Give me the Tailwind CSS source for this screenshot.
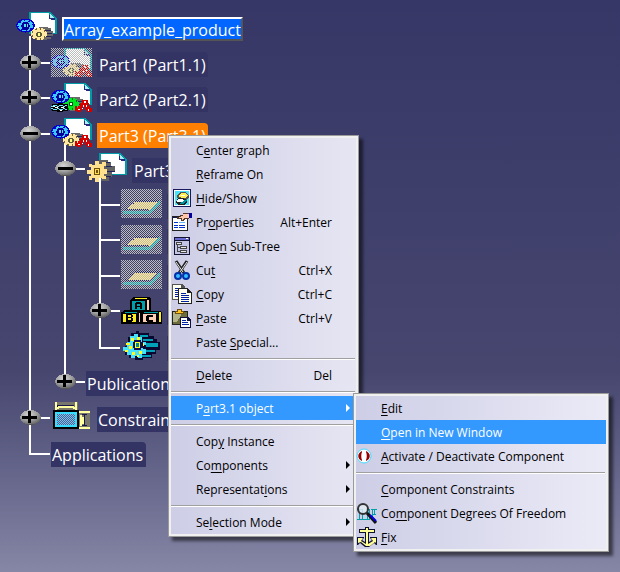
<!DOCTYPE html>
<html lang="en">
<head>
<meta charset="utf-8">
<meta name="viewport" content="width=device-width, initial-scale=1">
<title>Array_example_product</title>
<script src="https://cdn.jsdelivr.net/npm/@tailwindcss/browser@4"></script>
</head>
<body class="relative min-h-screen overflow-hidden bg-linear-to-b from-[#373767] via-[#46466f] via-65% to-[#8686a6] font-['Open_Sans','Noto_Sans',sans-serif] text-black">

<svg class="absolute size-0" aria-hidden="true">
  <defs>
    <!-- one-pixel checkerboards: dashed rows, the odd rows shifted by one -->
    <g id="checker" fill="none" stroke="#bdbdbd" stroke-dasharray="1 1">
      <path d="M0 .5h41m-41 2h41m-41 2h41m-41 2h41m-41 2h41m-41 2h41m-41 2h41m-41 2h41m-41 2h41m-41 2h41m-41 2h41m-41 2h41m-41 2h41m-41 2h41m-41 2h41"/>
      <path d="M1 -.5h40m-40 2h40m-40 2h40m-40 2h40m-40 2h40m-40 2h40m-40 2h40m-40 2h40m-40 2h40m-40 2h40m-40 2h40m-40 2h40m-40 2h40m-40 2h40m-40 2h40"/>
    </g>
    <g id="holes" fill="none" stroke="#8c4880" stroke-dasharray="1 1">
      <path d="M6 12.500h18m-18 2h18m-18 2h18m-18 2h18m-18 2h18m-18 2h18"/>
      <path d="M7 13.500h17m-17 2h17m-17 2h17m-17 2h17m-17 2h17"/>
    </g>
    <radialGradient id="metal" cx=".4" cy=".3" r=".7">
      <stop offset="0" stop-color="#d4d4d4"/><stop offset=".55" stop-color="#a2a2a2"/><stop offset="1" stop-color="#606060"/>
    </radialGradient>

    <!-- tree guides, 35px columns -->
    <symbol id="g-v" viewBox="0 0 35 36"><path fill="#fff" d="M14 0h2v36h-2z"/></symbol>
    <symbol id="g-l" viewBox="0 0 35 36"><path fill="#fff" d="M14 0h2v16h19v2H14z"/></symbol>
    <symbol id="g-t" viewBox="0 0 35 36"><path fill="#fff" d="M14 0h2v36h-2zM16 15h19v2H16z"/></symbol>
    <g id="knob"><ellipse cx="15.500" cy="15.500" rx="10.500" ry="7.500" fill="url(#metal)"/><path fill="#555" d="M11 22h9v1h-9z"/></g>
    <symbol id="g-plus" viewBox="0 0 35 36"><path fill="#fff" d="M14 0h2v36h-2zM16 15h19v2H16z"/><use href="#knob"/><path d="M7 14h15v3H7zM13 9h3v12h-3z"/></symbol>
    <symbol id="g-plus-end" viewBox="0 0 35 36"><path fill="#fff" d="M14 0h2v9h-2zM16 15h19v2H16z"/><use href="#knob"/><path d="M7 14h15v3H7zM13 9h3v12h-3z"/></symbol>
    <symbol id="g-minus" viewBox="0 0 35 36"><path fill="#fff" d="M14 0h2v36h-2zM16 15h19v2H16z"/><use href="#knob"/><path d="M8 14h15v3H8z"/></symbol>

    <!-- building blocks of the tree icons -->
    <g id="doc">
      <path fill="#009aa6" d="M13 0h21l7 7v15H13z"/><path fill="#fff" d="M15 1h18v5h6v15H15z"/><path fill="#29297c" d="M33 3h1v3h5v2h-4v-1h-2z"/><path fill="#a8eef2" d="M34 2l4 4h-4z"/>
    </g>
    <g id="gear-blue">
      <ellipse cx="9.500" cy="13.500" rx="9.500" ry="7" fill="#0000cc"/>
      <ellipse cx="9.500" cy="13.500" rx="6.500" ry="4.500" fill="#3cc8ff"/>
      <ellipse cx="9.500" cy="13.500" rx="7" ry="4.500" fill="none" stroke="#3cc8ff" stroke-width="2" stroke-dasharray="3 1.500"/>
      <path fill="#00009c" d="M7 10h5v1h1v2h1v2h-1v2h-1v1H7v-1H6v-2H5v-2h1v-2h1z"/>
      <path fill="#4de0ff" d="M8 12h4v3H8z"/><path fill="#00007c" d="M10 12h1v3h-1z"/>
    </g>
    <g id="gear-yellow">
      <path fill="#6a6a6a" d="M20 15h9v1h3v3h2v5h-2v3h-4v1h-8z"/><path fill="#24245c" d="M25 18h7v1h-7zM27 21h6v1h-6zM25 24h7v1h-7z"/>
      <ellipse cx="20" cy="22" rx="8" ry="6" fill="#7c6434"/>
      <ellipse cx="20" cy="22" rx="6" ry="4.500" fill="#ffe9a0"/>
      <ellipse cx="20" cy="22" rx="7" ry="5.500" fill="none" stroke="#ffe9a0" stroke-width="2" stroke-dasharray="3 1.500"/>
      <path fill="#5c5c3c" d="M18 20h4v1h1v3h-1v1h-4v-1h-1v-3h1z"/><path fill="#ffff80" d="M19 21h2v3h-2z"/>
    </g>
    <g id="axes">
      <path fill="#d40000" d="M31 17h6v3h1v3h1v2h2v4h-5v-2h-2v-3h-2v3h-2v2h-4v-1h-2v-5h2v2h1v-2h2v-3h2z"/>
      <path fill="#fff" d="M33 18h2v2h-2zM32 22h1v2h-1zM35 22h1v2h-1zM27 26h2v1h-2zM31 25h1v1h-1zM37 26h1v2h-1z"/>
    </g>
    <g id="part"><use href="#doc"/><use href="#gear-yellow"/><use href="#gear-blue"/><use href="#axes"/></g>
    <g id="plane">
      <path fill="#ffe680" d="M14 12h24l-10 9H5z"/><path fill="#23235e" d="M14 11h25v2H14zM9 14h4v1H9zM4 19h2v2H4zM5 20h23v1H5z"/><path fill="#00a5ad" d="M2 22h26l11-10v3L29 25H2z"/>
    </g>

    <symbol id="i-product" viewBox="0 0 41 29"><use href="#doc"/><use href="#gear-yellow" x="3"/><use href="#gear-blue"/></symbol>
    <symbol id="i-part" viewBox="0 0 41 29"><use href="#part"/></symbol>
    <symbol id="i-part-hidden" viewBox="0 0 41 29"><use href="#part"/><use href="#checker"/></symbol>
    <symbol id="i-part-linked" viewBox="0 0 41 29">
      <use href="#doc"/><path fill="#6a6a6a" d="M19 14h10v2h3v9h-5v3h-8z"/><path fill="#24245c" d="M25 18h7v1h-7zM27 21h5v1h-5z"/>
      <ellipse cx="20" cy="21" rx="8" ry="6" fill="#006a18"/>
      <ellipse cx="20" cy="21" rx="6" ry="4.500" fill="#00e820"/>
      <ellipse cx="20" cy="21" rx="7" ry="5.500" fill="none" stroke="#00e820" stroke-width="2" stroke-dasharray="3 1.500"/>
      <path fill="#004c18" d="M18 19h4v4h-4z"/><path fill="#fff" d="M19 20h2v2h-2z"/>
      <use href="#gear-blue"/>
      <path d="M1 21h6v-1h5v1h5v7h-5v1H6v-1H1v-1H0v-4h1z"/><path fill="#5ceeff" d="M2 22h4v1H2zM8 22h4v1H8zM14 22h2v1h-2zM2 26h4v1H2zM8 26h4v1H8zM14 26h2v1h-2zM0 23h2v1H0zM0 25h2v1H0zM6 23h2v1H6zM12 23h2v1h-2zM6 25h2v1H6zM12 25h2v1h-2z"/><path fill="#fff" d="M4 24h3v1H4zM10 24h3v1h-3zM2 23h2v1H2zM9 27h2v1H9z"/>
      <use href="#axes"/>
    </symbol>
    <symbol id="i-partdoc" viewBox="0 0 41 29">
      <use href="#doc"/>
      <path fill="#626262" d="M13 7h9v2h3v4h4v6h-3v5h-3v4h-8z"/><path fill="#24245c" d="M17 9h7v1h-7zM20 13h6v1h-6zM20 18h9v1h-9zM19 23h6v1h-6z"/>
      <path fill="#ffe08c" d="M9 8h4v3h3V9h4v4h-2v3h3v5h-3v2h2v3h-4v-1h-3v4H9v-4H6v2H3v-4h2v-2H1v-4h4v-3H3v-3h3v1h3z"/>
      <path fill="#705010" d="M8 15h6v7H8z"/><path fill="#ffe040" d="M9 16h4v5H9z"/><path fill="#705010" d="M10 17h2v3h-2z"/>
    </symbol>
    <!-- the stipple is aligned to the window, so planes on odd rows shift it by one -->
    <symbol id="i-plane" viewBox="0 0 41 29"><use href="#plane"/><use href="#checker"/></symbol>
    <symbol id="i-plane-odd" viewBox="0 0 41 29"><use href="#plane"/><use href="#checker" y="1"/></symbol>
    <symbol id="i-blocks" viewBox="0 0 41 29">
      <path d="M12 0h16l2 2v12h9l2 2v11H0V15h1l2-2h6V4z"/>
      <path fill="#ffee20" d="M14 1h12l-1 1H13zM2 17h13v8H2zM38 15h2v10h-2z"/><path fill="#00a0a8" d="M11 4h13v9H11zM4 15h12v1H4zM23 15h14v1H23z"/><path fill="#ffd0b4" d="M26 3h2v10h-2zM22 17h13v8H22zM18 16h1v9h-1z"/>
      <path d="M15 5h5v1h1v6h-2v-2h-3v2h-2V6h1z"/><path fill="#00a0a8" d="M16 7h3v2h-3z"/>
      <path d="M5 17h6v1h1v2h-1v1h1v3h-1v1H5z"/><path fill="#ffee20" d="M7 18h3v2H7zM7 21h3v2H7z"/>
      <path d="M26 18h6v2h-4v3h4v2h-6v-1h-1v-5h1z"/>
    </symbol>
    <symbol id="i-body" viewBox="0 0 41 29">
      <path fill="#080830" d="M10 2h5V0h3v2h10v3h5v3h3v3h3v8h-4v4h-4v4h-9v2h-8v-2H8v-3H4v-9h3V6h3z"/>
      <path fill="#00a0b8" d="M19 4h8v2h-8zM22 8h10v2H22zM25 12h12v4H25zM24 19h10v2H24zM21 24h9v2h-9z"/>
      <path fill="#45e2ff" d="M9 5h4V3h4v3h4v5h4v3h-3v4h3v5h-4v4h-4v-2h-3v2h-4v-3H6v-4H2v-4h4v-5h3z"/>
      <path fill="#ffff20" d="M10 7h3v3h-3zM16 6h3v3h-3zM5 12h4v2H5zM20 12h3v3h-3zM8 15h3v3H8zM4 19h3v2H4zM11 21h3v3h-3zM18 20h3v3h-3zM16 24h2v2h-2z"/>
      <path fill="#101050" d="M13 9h7v2h2v6h-2v2h-7v-2h-1v-6h1z"/><path fill="#ffff20" d="M14 11h5v6h-5z"/><path fill="#008898" d="M15 12h3v4h-3z"/>
    </symbol>
    <symbol id="i-constraints" viewBox="0 0 41 29">
      <path fill="#77776c" d="M4 0h23v9H4zM28 9h11v18H28z"/><path fill="#ffffa0" d="M4 0h2v8H4zM24 0h2v8h-2zM7 4h16v2H7zM6 5h2v2H6zM22 5h2v2h-2zM28 9h11v2H28zM28 25h11v2H28zM29 13h2v2h2v7h-2v2h-2z"/><path fill="#18184c" d="M7 3h16v1H7zM6 3h1v2H6zM33 12h1v12h-1zM31 12h5v1h-5zM31 23h5v1h-5z"/>
      <path d="M2 8h26v19H2z"/><path fill="#37dcff" d="M4 10h22v15H4z"/><use href="#holes"/>
    </symbol>
  </defs>
</svg>

<ul role="tree" aria-label="Specification tree" class="flex flex-col pt-[12px] pl-[15px] text-[16px] leading-[23px] text-white [&_svg]:shrink-0 [&_svg]:overflow-visible [&_svg]:[shape-rendering:crispEdges]">
  <li role="treeitem" aria-expanded="true" aria-selected="true" class="flex h-[35px] items-start pl-px">
    <svg class="h-[35px] w-[41px]"><path fill="#fff" d="M13 24h2v11h-2z"/><use href="#i-product" width="41" height="29"/></svg>
    <button class="mt-[5px] ml-[5px] h-[24px] border-2 border-t-white border-r-[#555] border-b-[#555] border-l-white bg-[#0066ff] pt-[2px] leading-[18px]">Array_example_product</button>
  </li>
  <li role="treeitem" aria-expanded="false" class="flex h-[35px] items-start">
    <svg class="h-[36px] w-[35px]"><use href="#g-plus" width="35" height="36"/></svg>
    <svg class="mt-px ml-px h-[29px] w-[41px]"><use href="#i-part-hidden" width="41" height="29"/></svg>
    <button class="mt-[5px] ml-[5px] rounded-tr bg-[#333364] px-[2px] pt-[2px]">Part1 (Part1.1)</button>
  </li>
  <li role="treeitem" aria-expanded="false" class="flex h-[36px] items-start">
    <svg class="h-[36px] w-[35px]"><use href="#g-plus" width="35" height="36"/></svg>
    <svg class="mt-px ml-px h-[29px] w-[41px]"><use href="#i-part-linked" width="41" height="29"/></svg>
    <button class="mt-[5px] ml-[5px] rounded-tr bg-[#333364] px-[2px] pt-[2px]">Part2 (Part2.1)</button>
  </li>
  <li role="treeitem" aria-expanded="true" class="flex h-[35px] items-start">
    <svg class="h-[36px] w-[35px]"><use href="#g-minus" width="35" height="36"/></svg>
    <svg class="ml-px h-[35px] w-[41px]"><path fill="#fff" d="M13 20h2v15h-2z"/><use href="#i-part" width="41" height="29"/></svg>
    <button class="mt-[5px] ml-[5px] rounded-tr bg-[#ff8000] px-[2px] pt-[2px]">Part3 (Part3.1)</button>
  </li>
  <li role="treeitem" aria-expanded="true" class="flex h-[36px] items-start">
    <svg class="h-[36px] w-[35px]"><use href="#g-v" width="35" height="36"/></svg>
    <svg class="h-[36px] w-[35px]"><use href="#g-minus" width="35" height="36"/></svg>
    <svg class="ml-px h-[36px] w-[41px]"><path fill="#fff" d="M13 22h2v14h-2z"/><use href="#i-partdoc" width="41" height="29"/></svg>
    <button class="mt-[5px] ml-[5px] rounded-tr bg-[#333364] px-[2px] pt-[2px]">Part3</button>
  </li>
  <li role="treeitem" class="flex h-[35px] items-start">
    <svg class="h-[36px] w-[35px]"><use href="#g-v" width="35" height="36"/></svg>
    <svg class="h-[36px] w-[35px]"><use href="#g-v" width="35" height="36"/></svg>
    <svg class="h-[36px] w-[35px]"><use href="#g-t" width="35" height="36"/></svg>
    <svg class="ml-px h-[29px] w-[41px]"><use href="#i-plane-odd" width="41" height="29"/></svg>
    <span class="mt-[5px] ml-[5px] h-[25px] w-[24px] bg-[#333364]"></span>
  </li>
  <li role="treeitem" class="flex h-[36px] items-start">
    <svg class="h-[36px] w-[35px]"><use href="#g-v" width="35" height="36"/></svg>
    <svg class="h-[36px] w-[35px]"><use href="#g-v" width="35" height="36"/></svg>
    <svg class="h-[36px] w-[35px]"><use href="#g-t" width="35" height="36"/></svg>
    <svg class="mt-px ml-px h-[29px] w-[41px]"><use href="#i-plane-odd" width="41" height="29"/></svg>
    <span class="mt-[5px] ml-[5px] h-[25px] w-[24px] bg-[#333364]"></span>
  </li>
  <li role="treeitem" class="flex h-[35px] items-start">
    <svg class="h-[36px] w-[35px]"><use href="#g-v" width="35" height="36"/></svg>
    <svg class="h-[36px] w-[35px]"><use href="#g-v" width="35" height="36"/></svg>
    <svg class="h-[36px] w-[35px]"><use href="#g-t" width="35" height="36"/></svg>
    <svg class="ml-px h-[29px] w-[41px]"><use href="#i-plane" width="41" height="29"/></svg>
    <span class="mt-[5px] ml-[5px] h-[25px] w-[24px] bg-[#333364]"></span>
  </li>
  <li role="treeitem" aria-expanded="false" class="flex h-[36px] items-start">
    <svg class="h-[36px] w-[35px]"><use href="#g-v" width="35" height="36"/></svg>
    <svg class="h-[36px] w-[35px]"><use href="#g-v" width="35" height="36"/></svg>
    <svg class="h-[36px] w-[35px]"><use href="#g-plus" width="35" height="36"/></svg>
    <svg class="mt-[2px] ml-px h-[29px] w-[41px]"><use href="#i-blocks" width="41" height="29"/></svg>
    <span class="mt-[5px] ml-[5px] h-[25px] w-[24px] bg-[#333364]"></span>
  </li>
  <li role="treeitem" class="flex h-[35px] items-start">
    <svg class="h-[36px] w-[35px]"><use href="#g-v" width="35" height="36"/></svg>
    <svg class="h-[36px] w-[35px]"><use href="#g-v" width="35" height="36"/></svg>
    <svg class="h-[36px] w-[35px]"><use href="#g-l" width="35" height="36"/></svg>
    <svg class="ml-px h-[29px] w-[41px]"><use href="#i-body" width="41" height="29"/></svg>
    <span class="mt-[5px] ml-[5px] h-[25px] w-[24px] bg-[#333364]"></span>
  </li>
  <li role="treeitem" aria-expanded="false" class="flex h-[36px] items-start">
    <svg class="h-[36px] w-[35px]"><use href="#g-v" width="35" height="36"/></svg>
    <svg class="h-[36px] w-[35px]"><use href="#g-plus-end" width="35" height="36"/></svg>
    <button class="mt-[5px] ml-px rounded-tr bg-[#333364] pt-[2px] pr-[3px] pl-px">Publications</button>
  </li>
  <li role="treeitem" aria-expanded="false" class="flex h-[35px] items-start">
    <svg class="h-[36px] w-[35px]"><use href="#g-plus" width="35" height="36"/></svg>
    <svg class="ml-px h-[29px] w-[41px]"><use href="#i-constraints" width="41" height="29"/></svg>
    <button class="mt-[5px] ml-[5px] rounded-tr bg-[#333364] pt-[2px] pr-[3px] pl-px">Constraints</button>
  </li>
  <li role="treeitem" class="flex h-[36px] items-start">
    <svg class="h-[36px] w-[35px]"><use href="#g-l" width="35" height="36"/></svg>
    <button class="mt-[5px] ml-px rounded-tr bg-[#333364] pt-[2px] pr-[3px] pl-px">Applications</button>
  </li>
</ul>

<ul role="menu" aria-label="Part3.1 context menu" class="absolute top-[135px] left-[168px] w-[191px] border border-[#9a9a9a] bg-linear-to-r from-[#cdcde6] to-[#e6e6f3] p-[2px] text-[12px] leading-[24px] shadow-[4px_4px_3px_#0008] outline-2 -outline-offset-3 outline-[#f0f0f0] [&_button]:flex [&_button]:h-[24px] [&_button]:w-full [&_button]:items-center [&_button]:text-left [&_button]:whitespace-nowrap [&_span]:pt-px [&_svg]:shrink-0 [&_u]:underline-offset-2">
  <li role="none"><button role="menuitem" class="pl-[25px]"><span>C<u>e</u>nter graph</span></button></li>
  <li role="none"><button role="menuitem" class="pl-[25px]"><span><u>R</u>eframe On</span></button></li>
  <li role="none"><button role="menuitem" class="pl-[2px]">
    <svg class="mr-[3px] size-[20px]" viewBox="0 0 20 20" shape-rendering="crispEdges"><path fill="#18185c" d="M0 1h18v18H0z"/><path fill="#fff" d="M1 2h16v16H1z"/><path fill="#47e3fa" d="M2 3h14v14H2z"/><path fill="#555" d="M7 4h5l4 3v2l-3 3H9l-5-2V7z"/><path fill="#ffee50" d="M8 5h4l3 2-3 3H9L5 8z"/><path fill="#fff" d="M8 7h4v1H8z"/><path fill="#222" d="M5 10h5l4 2v2l-3 3H5l-2-3z"/><path fill="#fff" d="M5 11h4l2 1-2 2H4z"/><path fill="#00929c" d="M9 14l3-2h2l-3 4H6z"/></svg>
    <span><u>H</u>ide/Show</span></button></li>
  <li role="none"><button role="menuitem" class="pr-[24px] pl-px">
    <svg class="mr-[4px] size-[20px]" viewBox="0 0 20 20" shape-rendering="crispEdges"><path fill="#222" d="M0 4h16v15H0z"/><path fill="#fff" d="M1 6h14v12H1z"/><path fill="#18185c" d="M1 5h9v1H1z"/><path fill="#0030c8" d="M2 10h4v1H2zM2 13h4v1H2zM7 13h6v1H7zM7 15h6v1H7zM2 15h4v1H2z"/><path fill="#55b0ff" d="M7 10h6v1H7z"/><path fill="#553828" d="M5 5h3V3h3V1h6v6h-4l-2 2h-2V7H5z"/><path fill="#ffc8a8" d="M7 5h2V4h2V2h6v4h-5l-2 2V6H7z"/><path fill="#0000a0" d="M17 1h3v5h-3z"/></svg>
    <span>Pr<u>o</u>perties</span><span class="ml-auto">Alt+Enter</span></button></li>
  <li role="none"><button role="menuitem" class="pl-[3px]">
    <svg class="mr-[4px] h-[20px] w-[18px]" viewBox="0 0 18 20" shape-rendering="crispEdges"><path fill="#111130" d="M0 1h16v18H0z"/><path fill="#6a6ad0" d="M1 2h14v2H1z"/><path fill="#c4c4e4" d="M1 5h14v13H1z"/><path fill="#fff" d="M12 2h2v1h-2z"/><path fill="#444" d="M2 6h6v3H4v2h2v-1h7v3H6v-1H4v3h2v-1h7v3H6v-1H3V9H2z"/><path fill="#e8e8e8" d="M3 7h4v1H3zM7 11h5v1H7zM7 15h5v1H7z"/></svg>
    <span>Ope<u>n</u> Sub-Tree</span></button></li>
  <li role="none"><button role="menuitem" class="pr-[24px] pl-[3px]">
    <svg class="mr-[2px] size-[20px]" viewBox="0 0 20 20"><path stroke="#222" stroke-width="3" d="M2 1l8 12M13 1L5 13"/><path stroke="#e8e8e8" d="M2 2l7 10M13 2L6 12"/><g fill="#35bfff" stroke="#0030a8" stroke-width="2"><circle cx="4" cy="16" r="3"/><circle cx="12" cy="16" r="3"/></g></svg>
    <span>Cu<u>t</u></span><span class="ml-auto">Ctrl+X</span></button></li>
  <li role="none"><button role="menuitem" class="pr-[24px] pl-px">
    <svg class="mr-[4px] size-[20px]" viewBox="0 0 20 20" shape-rendering="crispEdges"><path fill="#555" d="M0 0h10l3 3v13H0z"/><path fill="#fffff0" d="M1 1h8v3h3v11H1z"/><path fill="#0020a0" d="M3 4h3v1H3zM3 6h3v1H3zM3 8h3v1H3zM3 10h3v1H3zM3 12h3v1H3z"/><path fill="#222" d="M6 4h9l5 5v11H6z"/><path fill="#fffff0" d="M7 5h8v4h4v10H7z"/><path fill="#0020a0" d="M9 9h5v1H9zM9 11h8v1H9zM9 13h8v1H9zM9 15h8v1H9zM9 17h8v1H9z"/></svg>
    <span><u>C</u>opy</span><span class="ml-auto">Ctrl+C</span></button></li>
  <li role="none"><button role="menuitem" class="pr-[24px] pl-px">
    <svg class="mr-[4px] size-[20px]" viewBox="0 0 20 20" shape-rendering="crispEdges"><path fill="#222" d="M0 3h16v14H0z"/><path fill="#6c6c3c" d="M1 4h14v12H1z"/><path fill="#b4b48a" d="M1 4h10L5 14H1z"/><path fill="#70500c" d="M3 3h2V1h5v2h2v3H3z"/><path fill="#ffc420" d="M4 4h2V2h3v2h2v1H4z"/><path fill="#101040" d="M8 9h8l3 3v8H8z"/><path fill="#fff" d="M9 10h6v3h3v6H9z"/><path fill="#0020a0" d="M10 12h4v1h-4zM10 14h6v1h-6zM10 16h7v1h-7z"/></svg>
    <span><u>P</u>aste</span><span class="ml-auto">Ctrl+V</span></button></li>
  <li role="none"><button role="menuitem" class="pl-[25px]"><span>Paste <u>S</u>pecial...</span></button></li>
  <li role="separator" class="mr-px flex h-[9px] items-center"><hr class="h-[2px] w-full border-t border-b border-t-[#a0a0a0] border-b-white"></li>
  <li role="none"><button role="menuitem" class="pr-[24px] pl-[25px]"><span><u>D</u>elete</span><span class="ml-auto">Del</span></button></li>
  <li role="separator" class="mr-px flex h-[9px] items-center"><hr class="h-[2px] w-full border-t border-b border-t-[#a0a0a0] border-b-white"></li>
  <li role="none" class="relative"><button role="menuitem" aria-haspopup="true" aria-expanded="true" class="bg-[#3399ff] pr-[6px] pl-[25px] text-white"><span>P<u>a</u>rt3.1 object</span><svg class="ml-auto h-[8px] w-[4px]" viewBox="0 0 4 8" fill="currentColor"><path d="M0 0l4 4-4 4z"/></svg></button>

    <ul role="menu" aria-label="Part3.1 object" class="absolute -top-[3px] left-full -ml-[3px] w-[256px] border border-[#9a9a9a] bg-linear-to-r from-[#cdcde6] to-[#ebebf7] p-[2px] shadow-[4px_4px_3px_#0008] outline-2 -outline-offset-3 outline-[#f0f0f0]">
      <li role="none"><button role="menuitem" class="pl-[25px]"><span><u>E</u>dit</span></button></li>
      <li role="none"><button role="menuitem" class="bg-[#3399ff] pl-[25px] text-white"><span><u>O</u>pen in New Window</span></button></li>
      <li role="none"><button role="menuitem">
        <svg class="mr-[9px] size-[16px]" viewBox="0 0 16 16"><circle cx="8" cy="8" r="7" fill="#fff" stroke="#40dcff"/><path fill="#960000" d="M6 3C1 5 1 11 6 13V12C5 10 5 6 6 4zM10 3c5 2 5 8 0 10V12c1-2 1-6 0-8z"/></svg>
        <span><u>A</u>ctivate / Deactivate Component</span></button></li>
      <li role="separator" class="mr-px flex h-[9px] items-center"><hr class="h-[2px] w-full border-t border-b border-t-[#a0a0a0] border-b-white"></li>
      <li role="none"><button role="menuitem" class="pl-[25px]"><span><u>C</u>omponent Constraints</span></button></li>
      <li role="none"><button role="menuitem" class="pl-px">
        <svg class="mr-[4px] h-[22px] w-[20px]" viewBox="0 0 20 22"><path fill="none" stroke="#00a0a8" shape-rendering="crispEdges" d="M0 7.500h5M0 17.500h13M2.500 7v10M5.500 7v10M8.500 7.500h4v10M10.500 7v10M14 7.500h6M15.500 7v10M17.500 7v5M15 12.500h4M14 17.500h3"/><circle cx="6" cy="7" r="5" fill="#e4eef5" fill-opacity=".8" stroke="#333" stroke-width="2"/><path stroke="#111" stroke-width="3" d="M10 11l9 10"/><path stroke="#0000e0" stroke-width="2" d="M13 13l6 6"/></svg>
        <span>Co<u>m</u>ponent Degrees Of Freedom</span></button></li>
      <li role="none"><button role="menuitem" class="pl-px">
        <svg class="mr-[4px] size-[20px]" viewBox="0 0 20 20"><path fill="#101030" d="M8 0h4v2h6v4h-6v9l3-2-2-2v-1h7v8h-1l-2-2-5 4h-4l-5-4-2 2H0v-8h7v1l-2 2 3 2V6H2V2h6z"/><path fill="#ffff98" d="M9 1h2v2h6v2h-6v12l5-3-2-3h5v5l-1-1-5 4H9l-5-4-3 1v-5h5l-2 3 5 3V5H3V3h6z"/></svg>
        <span><u>F</u>ix</span></button></li>
    </ul>
  </li>
  <li role="separator" class="mr-px flex h-[9px] items-center"><hr class="h-[2px] w-full border-t border-b border-t-[#a0a0a0] border-b-white"></li>
  <li role="none"><button role="menuitem" class="pl-[25px]"><span>Cop<u>y</u> Instance</span></button></li>
  <li role="none"><button role="menuitem" aria-haspopup="true" class="pr-[6px] pl-[25px]"><span>Co<u>m</u>ponents</span><svg class="ml-auto h-[8px] w-[4px]" viewBox="0 0 4 8"><path d="M0 0l4 4-4 4z"/></svg></button></li>
  <li role="none"><button role="menuitem" aria-haspopup="true" class="pr-[6px] pl-[25px]"><span>Representat<u>i</u>ons</span><svg class="ml-auto h-[8px] w-[4px]" viewBox="0 0 4 8"><path d="M0 0l4 4-4 4z"/></svg></button></li>
  <li role="separator" class="mr-px flex h-[9px] items-center"><hr class="h-[2px] w-full border-t border-b border-t-[#a0a0a0] border-b-white"></li>
  <li role="none"><button role="menuitem" aria-haspopup="true" class="pr-[6px] pl-[25px]"><span>Se<u>l</u>ection Mode</span><svg class="ml-auto h-[8px] w-[4px]" viewBox="0 0 4 8"><path d="M0 0l4 4-4 4z"/></svg></button></li>
</ul>

</body>
</html>
